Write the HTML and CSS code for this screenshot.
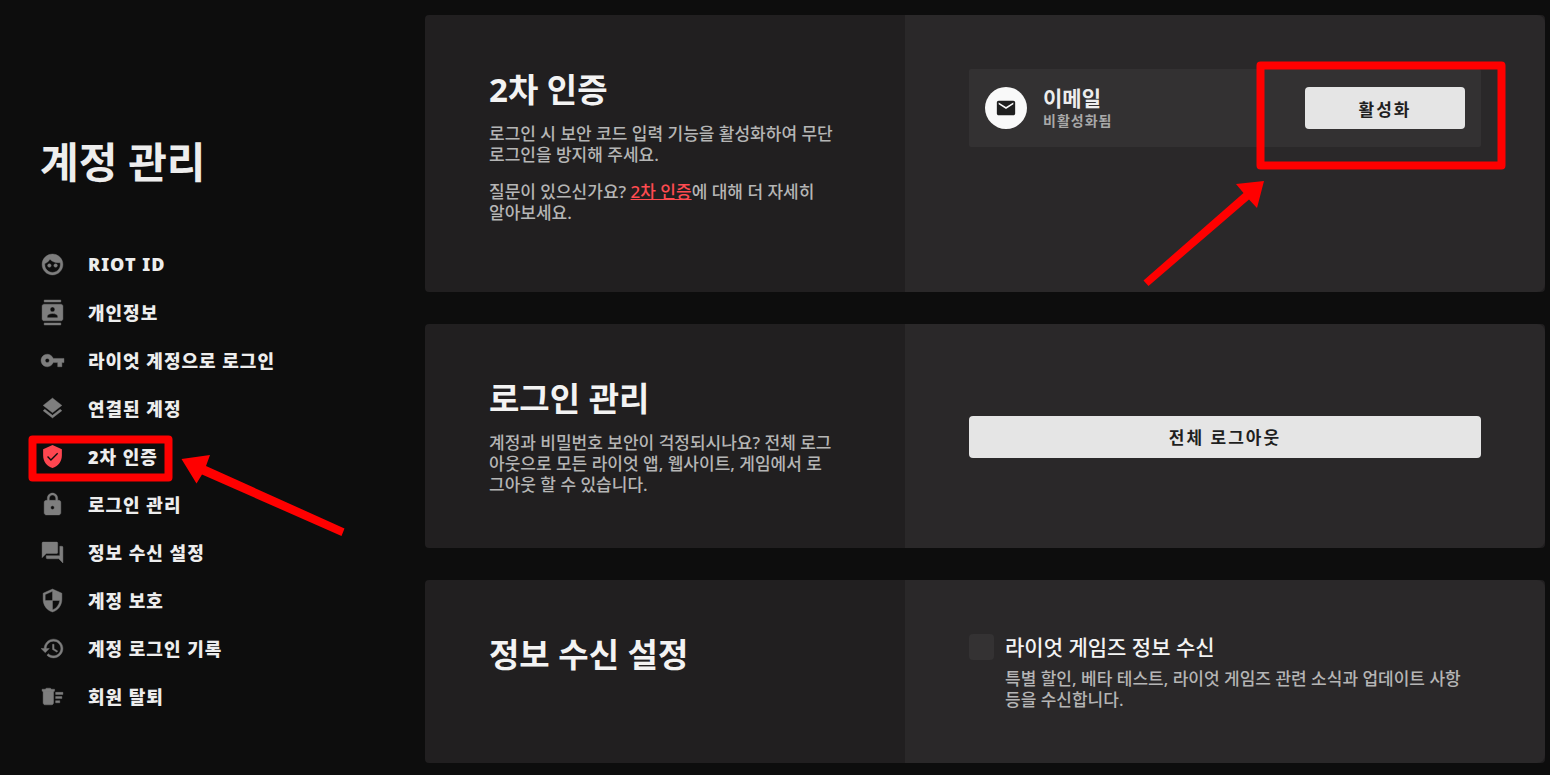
FILE: index.html
```html
<!DOCTYPE html>
<html lang="ko">
  <head>
    <meta charset="UTF-8">
    <title>계정 관리</title>
    <link rel="stylesheet" href="styles.css">
  </head>
  <body>
  <div class="page">
    <aside class="sidebar">
      <h1>계정 관리</h1>
      <nav>
        <a href="#riot-id">
          <svg class="icon" viewBox="0 0 24 24"><path d="M12 2C6.480 2 2 6.480 2 12s4.480 10 10 10 10-4.480 10-10S17.520 2 12 2zm0 17.600c-4 0-7.400-3.300-7.400-7.300 0-.5 0-.8.1-1.200C6.800 10.200 8.600 8.800 9.600 7c1.800 2 4.600 3.300 7.800 3.300.7 0 1.300-.1 1.900-.2.1.7.2 1.400.2 2.100 0 4.100-3.400 7.400-7.500 7.400z"/><circle cx="9" cy="13" r="1.700"/><circle cx="15" cy="13" r="1.700"/></svg>
          RIOT ID
        </a>
        <a href="#personal">
          <svg class="icon" viewBox="0 0 24 24"><path d="M20 0H4v2h16V0zM4 24h16v-2H4v2zM20 4H4c-1.100 0-2 .9-2 2v12c0 1.100.9 2 2 2h16c1.100 0 2-.9 2-2V6c0-1.100-.9-2-2-2zm-8 2.750c1.240 0 2.250 1.010 2.250 2.250s-1.010 2.250-2.250 2.250S9.750 10.240 9.750 9 10.760 6.750 12 6.750zM17 17H7v-1.500c0-1.670 3.330-2.500 5-2.500s5 .83 5 2.500V17z"/></svg>
          개인정보
        </a>
        <a href="#social">
          <svg class="icon" viewBox="0 0 24 24"><path d="M12.650 10C11.830 7.670 9.610 6 7 6c-3.310 0-6 2.690-6 6s2.690 6 6 6c2.610 0 4.830-1.670 5.650-4H17v4h4v-4h2v-4H12.650zM7 14c-1.100 0-2-.9-2-2s.9-2 2-2 2 .9 2 2-.9 2-2 2z"/></svg>
          라이엇 계정으로 로그인
        </a>
        <a href="#connected">
          <svg class="icon" viewBox="0 0 24 24"><path d="M11.990 18.540l-7.370-5.730L3 14.070l9 7 9-7-1.630-1.270-7.380 5.740zM12 16l7.360-5.730L21 9l-9-7-9 7 1.630 1.270L12 16z"/></svg>
          연결된 계정
        </a>
        <a class="active" href="#mfa">
          <svg class="icon" viewBox="0 0 24 24"><path d="M12 1L3 5v6c0 5.550 3.840 10.740 9 12 5.160-1.260 9-6.450 9-12V5l-9-4zM10.500 16.200L6.800 12.500l.9-.9 2.800 2.800 6-6 .9.900z"/></svg>
          2차 인증
        </a>
        <a href="#login">
          <svg class="icon" viewBox="0 0 24 24"><path d="M18 8h-1V6c0-2.760-2.240-5-5-5S7 3.240 7 6v2H6c-1.100 0-2 .9-2 2v10c0 1.100.9 2 2 2h12c1.100 0 2-.9 2-2V10c0-1.100-.9-2-2-2zm-6 8.700c-.9 0-1.700-.8-1.700-1.700s.8-1.700 1.700-1.700 1.700.8 1.700 1.700-.8 1.700-1.700 1.700zM15.100 8H8.900V6c0-1.710 1.390-3.100 3.100-3.100s3.100 1.390 3.100 3.100v2z"/></svg>
          로그인 관리
        </a>
        <a href="#news">
          <svg class="icon" viewBox="0 0 24 24"><path d="M21 6h-2v9H6v2c0 .55.45 1 1 1h11l4 4V7c0-.55-.45-1-1-1zm-4 6V3c0-.55-.45-1-1-1H3c-.55 0-1 .45-1 1v14l4-4h10c.55 0 1-.45 1-1z"/></svg>
          정보 수신 설정
        </a>
        <a href="#protect">
          <svg class="icon" viewBox="0 0 24 24"><path d="M12 1L3 5v6c0 5.550 3.840 10.740 9 12 5.160-1.260 9-6.450 9-12V5l-9-4zm0 10.990h7c-.53 4.120-3.280 7.790-7 8.940V12H5V6.300l7-3.110v8.800z"/></svg>
          계정 보호
        </a>
        <a href="#history">
          <svg class="icon" viewBox="0 0 24 24"><path d="M13 3c-4.970 0-9 4.030-9 9H1l3.890 3.890.07.14L9 12H6c0-3.870 3.130-7 7-7s7 3.130 7 7-3.130 7-7 7c-1.930 0-3.680-.79-4.940-2.060l-1.420 1.420C8.270 19.990 10.510 21 13 21c4.970 0 9-4.030 9-9s-4.030-9-9-9zm-1 5v5l4.280 2.540.72-1.210-3.500-2.080V8H12z"/></svg>
          계정 로그인 기록
        </a>
        <a href="#delete">
          <svg class="icon" viewBox="0 0 24 24"><path d="M15 16h4v2h-4zm0-8h7v2h-7zm0 4h6v2h-6zM3 18c0 1.100.9 2 2 2h6c1.100 0 2-.9 2-2V7H3v11zM14 5h-3l-1-1H6L5 5H2v2h12z"/></svg>
          회원 탈퇴
        </a>
      </nav>
    </aside>

    <main>
      <section class="card" id="mfa">
        <div class="info">
          <h2>2차 인증</h2>
          <p class="spaced">로그인 시 보안 코드 입력 기능을 활성화하여 무단 로그인을 방지해 주세요.</p>
          <p class="spaced">질문이 있으신가요? <a href="#mfa-help">2차 인증</a>에 대해 더 자세히 알아보세요.</p>
        </div>
        <div class="panel top">
          <div class="method">
            <span class="badge">
              <svg viewBox="0 0 24 24"><path d="M20 4H4c-1.100 0-2 .9-2 2v12c0 1.100.9 2 2 2h16c1.100 0 2-.9 2-2V6c0-1.100-.9-2-2-2zm0 4l-8 5-8-5V6l8 5 8-5v2z"/></svg>
            </span>
            <div class="method-text">
              <strong>이메일</strong>
              <small>비활성화됨</small>
            </div>
            <button type="button">활성화</button>
          </div>
        </div>
      </section>

      <section class="card" id="login">
        <div class="info">
          <h2>로그인 관리</h2>
          <p>계정과 비밀번호 보안이 걱정되시나요? 전체 로그<br>아웃으로 모든 라이엇 앱, 웹사이트, 게임에서 로<br>그아웃 할 수 있습니다.</p>
        </div>
        <div class="panel">
          <button type="button" class="wide">전체 로그아웃</button>
        </div>
      </section>

      <section class="card" id="news">
        <div class="info">
          <h2>정보 수신 설정</h2>
        </div>
        <div class="panel">
          <div class="option">
            <input type="checkbox" id="news-optin">
            <label for="news-optin">라이엇 게임즈 정보 수신</label>
            <p>특별 할인, 베타 테스트, 라이엇 게임즈 관련 소식과 업데이트 사항 등을 수신합니다.</p>
          </div>
        </div>
      </section>
    </main>
  </div>

  <!-- red guide marks -->
  <svg class="marks" width="1550" height="775" viewBox="0 0 1550 775">
    <rect x="32.500" y="439.500" width="136" height="38"/>
    <path d="M181.500 459L210 455l-4 11L344.500 528.500l-3 7.500L202 474.500l-5.500 9z"/>
    <rect x="1260.500" y="65.500" width="241" height="100"/>
    <path d="M1264 181l-7 27-8-8.500L1148.500 286l-5-5.500 100-87.500-7.500-9z"/>
  </svg>
  </body>
</html>
```

FILE: styles.css
```css
* {
  box-sizing: border-box;
}
body {
  margin: 0;
  background: #0d0d0d;
  color: #ededed;
  font-family: "Noto Sans", "Noto Sans CJK KR", sans-serif;
  font-size: 17px;
}
h1, h2, p {
  margin: 0;
}
.page {
  display: grid;
  grid-template-columns: 425px 1fr;
}

.sidebar {
  padding: 132px 40px 0;
}
h1 {
  font-size: 42px;
  line-height: 60px;
  margin-bottom: 48px;
}
nav a {
  display: flex;
  align-items: center;
  gap: 23px;
  height: 48px;
  color: #ededed;
  font-weight: 900;
  font-size: 18px;
  letter-spacing: 1px;
  text-decoration: none;
}
.icon {
  width: 25px;
  height: 25px;
  overflow: visible;
  fill: #7e7e7e;
  stroke: #7e7e7e;
  stroke-width: 0.4;
}
.active .icon {
  fill: #ff4650;
  stroke: none;
}

main {
  display: flex;
  flex-direction: column;
  gap: 32px;
  padding: 15px 5px 12px 0;
}
.card {
  display: grid;
  grid-template-columns: 3fr 4fr;
  border-radius: 4px;
  background: #211f20;
  overflow: hidden;
}
.info {
  padding: 55px 64px 53px;
}
h2 {
  font-size: 33px;
  line-height: 40px;
  margin-bottom: 13px;
  color: #f3f3f3;
}
p {
  color: #b5b5b5;
  font-weight: 500;
  line-height: 21px;
  word-break: keep-all;
}
p.spaced {
  margin-bottom: 16px;
}
p a {
  color: #ff4b50;
}
.panel {
  display: flex;
  align-items: center;
  padding: 54px 64px 53px;
  background: #2a2829;
  border-radius: 0 8px 8px 0;
}
.panel.top {
  align-items: flex-start;
}

.method {
  display: flex;
  flex: 1;
  align-items: center;
  gap: 16px;
  height: 78px;
  padding: 0 16px;
  border-radius: 2px;
  background: #333132;
}
.badge {
  display: flex;
  align-items: center;
  justify-content: center;
  width: 42px;
  height: 42px;
  border-radius: 50%;
  background: #f9f9f9;
}
.badge svg {
  width: 22px;
  height: 22px;
  fill: #1f1f1f;
}
.method-text {
  display: flex;
  flex-direction: column;
  flex: 1;
}
.method-text strong {
  font-size: 21px;
  line-height: 26px;
}
.method-text small {
  font-size: 14px;
  line-height: 20px;
  font-weight: 700;
  letter-spacing: 1px;
  color: #a8a8a8;
}
button {
  width: 160px;
  height: 42px;
  border: 0;
  border-radius: 4px;
  background: #e5e5e5;
  color: #1f1f1f;
  font: 700 17px "Noto Sans", "Noto Sans CJK KR", sans-serif;
  letter-spacing: 2px;
}
button.wide {
  width: 100%;
}

.option {
  display: grid;
  grid-template-columns: 25px 1fr;
  gap: 8px 11px;
  align-items: center;
}
.option input {
  appearance: none;
  width: 25px;
  height: 26px;
  margin: 0;
  border-radius: 4px;
  background: #343233;
}
.option label {
  font-size: 21px;
  line-height: 26px;
  font-weight: 500;
  color: #f3f3f3;
}
.option p {
  grid-column: 2;
}

.marks {
  position: absolute;
  top: 0;
  left: 0;
  fill: #f00;
  pointer-events: none;
}
.marks rect {
  fill: none;
  stroke: #f00;
  stroke-width: 8;
  stroke-linejoin: round;
}
```
